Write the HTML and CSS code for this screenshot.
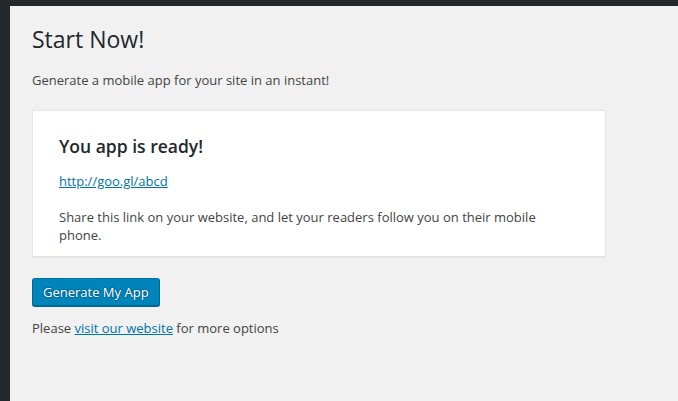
FILE: index.html
```html
<!DOCTYPE html>
<html>
<head>
<meta charset="utf-8">
<link rel="stylesheet" href="styles.css">
</head>
<body>
<div class="topbar"></div>
<div class="layout">
  <aside class="sidebar"></aside>
  <main class="main">
    <h1 class="title">Start Now!</h1>
    <p class="intro">Generate a mobile app for your site in an instant!</p>
    <div class="card">
      <h2 class="card-title">You app is ready!</h2>
      <p class="card-link"><a href="#">http://goo.gl/abcd</a></p>
      <p class="card-text">Share this link on your website, and let your readers follow you on their mobile phone.</p>
    </div>
    <button class="btn-primary" type="button">Generate My App</button>
    <p class="note">Please <a href="#">visit our website</a> for more options</p>
  </main>
</div>
</body>
</html>
```

FILE: styles.css
```css
html, body {
  margin: 0;
  padding: 0;
  height: 100%;
}
body {
  background: #f1f1f1;
  font-family: "Open Sans", "Liberation Sans", sans-serif;
  font-size: 13px;
  color: #444;
  display: flex;
  flex-direction: column;
}
a {
  color: #0073aa;
  text-decoration: underline;
}
.topbar {
  height: 6px;
  background: #23282d;
  flex: none;
}
.layout {
  flex: 1;
  display: flex;
}
.sidebar {
  width: 10px;
  background: #23282d;
  flex: none;
}
.main {
  flex: 1;
  padding: 19px 20px 0 22px;
}
.title {
  margin: 0;
  font-size: 23px;
  font-weight: 400;
  line-height: 29px;
  color: #23282d;
}
.intro {
  margin: 17px 0 0;
  line-height: 19.5px;
}
.card {
  margin-top: 19.5px;
  width: 520px;
  padding: 9px 26px 12px;
  background: #fff;
  border: 1px solid #e5e5e5;
  box-shadow: 0 1px 1px rgba(0,0,0,0.04);
}
.card-title {
  margin: 14px 0 0;
  font-size: 17.5px;
  line-height: 24px;
  font-weight: 600;
  color: #23282d;
}
.card-link {
  margin: 14px 0 0;
  line-height: 18px;
}
.card-text {
  margin: 18px 0 0;
  line-height: 18px;
}
.btn-primary {
  display: block;
  margin-top: 21px;
  height: 28px;
  padding: 0 10px 1px;
  font-family: inherit;
  font-size: 13px;
  line-height: 26px;
  color: #fff;
  background: #0085ba;
  border: 1px solid;
  border-color: #0073aa #006799 #006799;
  border-radius: 3px;
  box-shadow: 0 1px 0 #006799;
  text-shadow: 0 -1px 1px #006799, 1px 0 1px #006799, 0 1px 1px #006799, -1px 0 1px #006799;
  cursor: pointer;
}
.note {
  margin: 12.5px 0 0;
  line-height: 19.5px;
}
```
